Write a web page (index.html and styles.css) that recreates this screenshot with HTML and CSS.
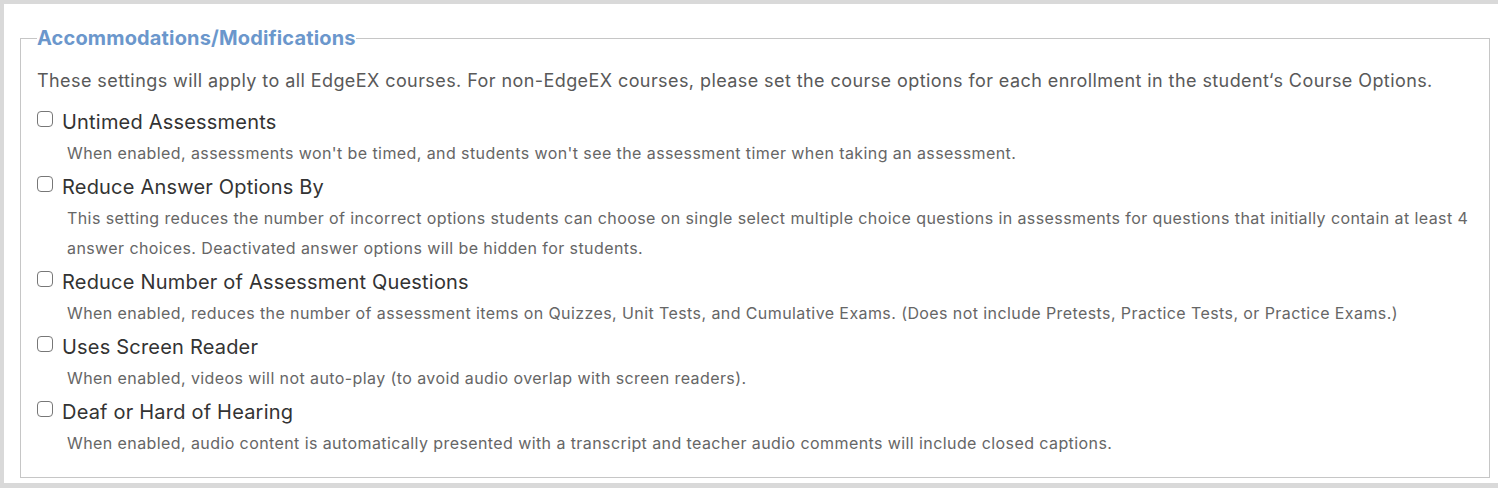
FILE: index.html
```html
<!DOCTYPE html>
<html lang="en">
<head>
    <meta charset="UTF-8">
    <title>Accommodations/Modifications</title>
    <link rel="stylesheet" href="styles.css">
</head>
<body>
    <div class="panel">
        <fieldset class="settings-box">
            <legend>Accommodations/Modifications</legend>
            <p class="intro">These settings will apply to all EdgeEX courses. For non-EdgeEX courses, please set the course options for each enrollment in the student‘s Course Options.</p>

            <div class="option">
                <label><input type="checkbox" name="untimed"> Untimed Assessments</label>
                <p class="help">When enabled, assessments won't be timed, and students won't see the assessment timer when taking an assessment.</p>
            </div>
            <div class="option">
                <label><input type="checkbox" name="reduceOptions"> Reduce Answer Options By</label>
                <p class="help">This setting reduces the number of incorrect options students can choose on single select multiple choice questions in assessments for questions that initially contain at least 4 answer choices. Deactivated answer options will be hidden for students.</p>
            </div>
            <div class="option">
                <label><input type="checkbox" name="reduceQuestions"> Reduce Number of Assessment Questions</label>
                <p class="help">When enabled, reduces the number of assessment items on Quizzes, Unit Tests, and Cumulative Exams. (Does not include Pretests, Practice Tests, or Practice Exams.)</p>
            </div>
            <div class="option">
                <label><input type="checkbox" name="screenReader"> Uses Screen Reader</label>
                <p class="help">When enabled, videos will not auto-play (to avoid audio overlap with screen readers).</p>
            </div>
            <div class="option">
                <label><input type="checkbox" name="hearing"> Deaf or Hard of Hearing</label>
                <p class="help">When enabled, audio content is automatically presented with a transcript and teacher audio comments will include closed captions.</p>
            </div>
        </fieldset>
    </div>
</body>
</html>
```

FILE: styles.css
```css
body {
    font-family: Inter, "Noto Sans", sans-serif;
    background-color: #d9d9d9;
    color: #333;
    margin: 0;
    padding: 4px 0 5px 4px;
}
.panel {
    background: #fff;
    padding: 22px 8px 5px 16px;
}
.settings-box {
    border: 1px solid #c6c6c6;
    margin: 0;
    padding: 17px 20px 14px 16px;
}
.settings-box legend {
    color: #6b97cc;
    font-weight: bold;
    font-size: 20px;
    line-height: 24px;
    padding: 0;
    letter-spacing: 0.15px;
}
.intro {
    margin: 0 0 13px 0;
    font-size: 18px;
    line-height: 28px;
    color: #595959;
    letter-spacing: 0.42px;
}
.option {
    margin-bottom: 5px;
}
.option label {
    display: flex;
    align-items: center;
    gap: 9px;
    font-size: 20px;
    line-height: 28px;
    color: #333;
    letter-spacing: 0.2px;
}
.option input {
    appearance: none;
    width: 16px;
    height: 16px;
    margin: 0;
    border: 1.5px solid #777;
    border-radius: 4px;
    background: #fff;
    position: relative;
    top: -3px;
}
.help {
    margin: 2px 0 0 30px;
    font-size: 16px;
    line-height: 30px;
    color: #666;
    letter-spacing: 0.41px;
}
```
